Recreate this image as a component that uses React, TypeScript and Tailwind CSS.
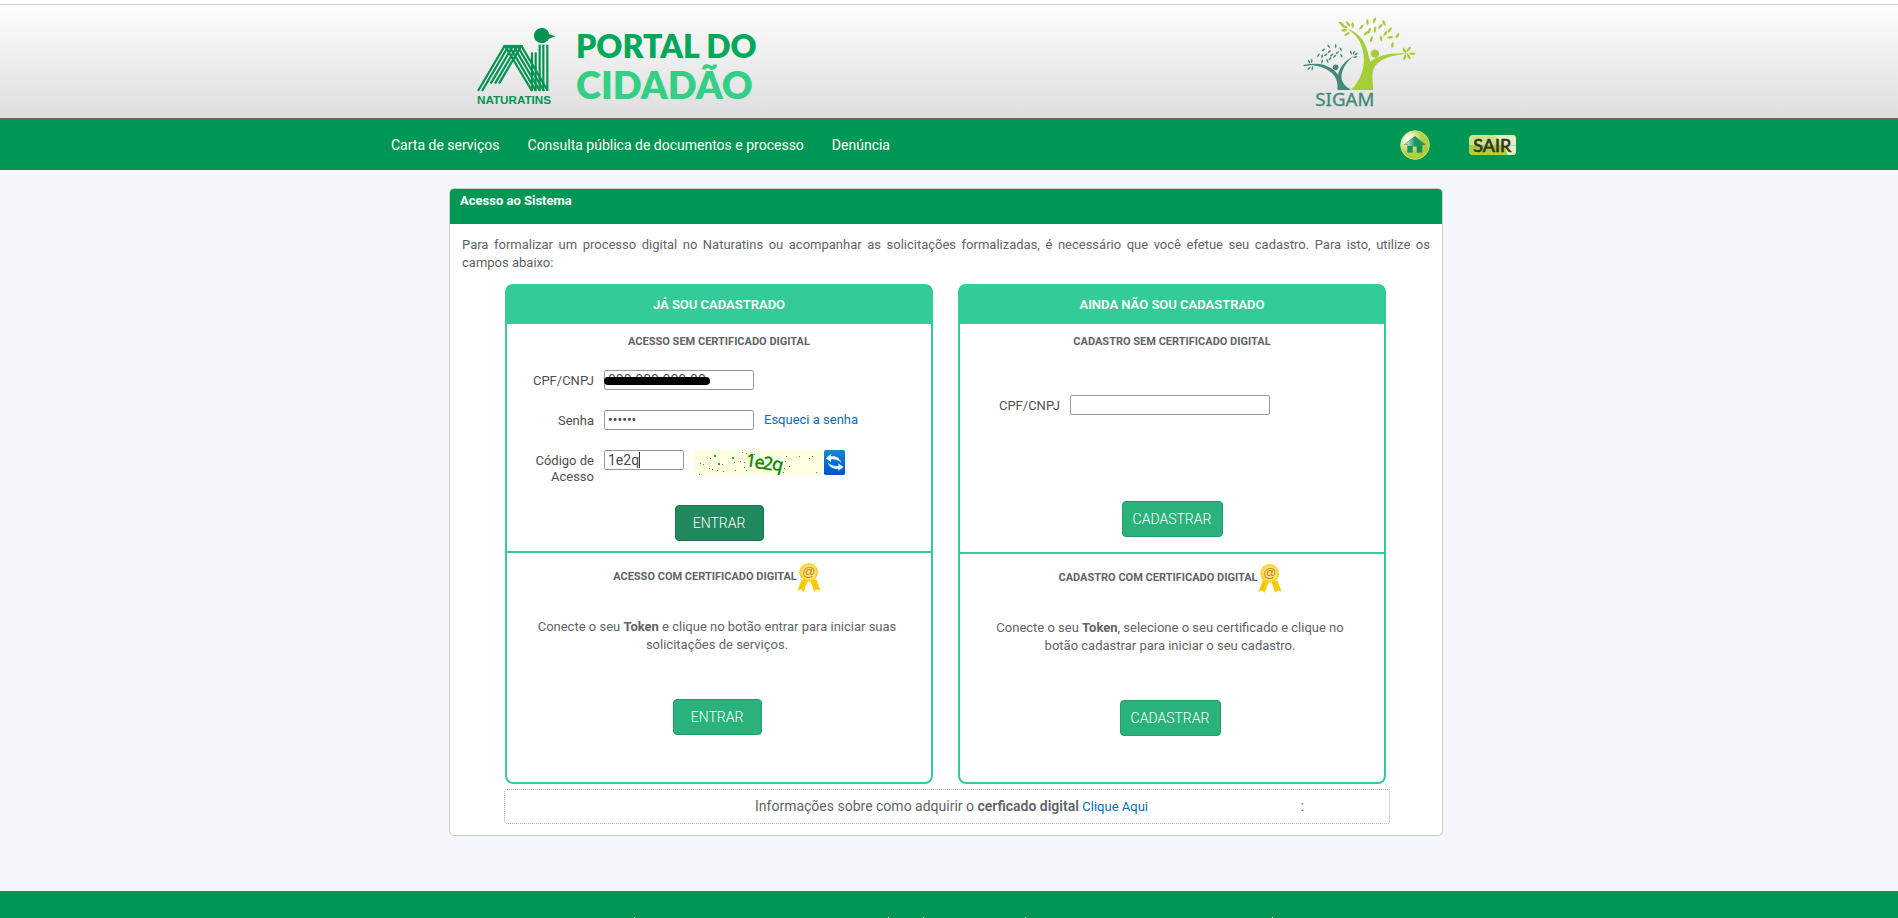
import React, { useState } from 'react';

const fieldClass =
  'h-5 rounded-[2px] border border-[#999999] bg-white px-[3px] text-[14px] leading-4 text-[#4a4a4a] outline-none';
const labelClass = 'shrink-0 pt-[3px] text-right text-[13px] leading-4 text-[#4f4f4f]';
const linkClass = 'text-[13px] text-[#0a6ebd] hover:underline';

const NaturatinsLogo: React.FC = () => (
  <svg width="90" height="90" viewBox="0 0 270 270" role="img" aria-label="Naturatins">
    <g stroke="#019350" strokeWidth="6.5" fill="none">
      <path d="M24 213 L103 79" />
      <path d="M36 213 L115 79" />
      <path d="M62 191 L128 79" />
      <path d="M75 191 L141 79" />
      <path d="M87 191 L153 79" />
      <path d="M106 79 L186 213" />
      <path d="M118 79 L198 213" />
      <path d="M131 79 L210 213" />
      <path d="M143 79 L222 213" />
      <path d="M155 79 L232 210" />
      <path d="M100 78 H158" />
      <path d="M186 97 V213" />
      <path d="M197 97 V213" />
      <path d="M209 74 V213" />
      <path d="M220 74 V213" />
      <path d="M232 74 V213" />
    </g>
    <path
      d="M216 24 C203 24 192 34 192 47 C192 60 203 69 216 69 C226 69 233 63 237 56 L256 49 L238 43 C235 31 227 24 216 24 Z"
      fill="#019350"
    />
    <text x="21" y="252" fontSize="35" fontWeight="700" fill="#019350" fontFamily="Liberation Sans, Arial, sans-serif">
      NATURATINS
    </text>
  </svg>
);

const greenLeaves: [number, number, number][] = [
  [184, 45, 40], [202, 31, -5], [223, 25, 20], [208, 56, 20], [198, 64, 45], [225, 53, 5],
  [241, 43, 40], [252, 33, -25], [269, 54, 35], [256, 64, 30], [243, 80, -5], [214, 82, 15],
  [271, 76, 80], [292, 71, 30], [277, 99, 10], [158, 39, -5], [144, 36, -35], [133, 44, -75],
  [124, 35, -60], [141, 66, 60], [132, 55, 85], [313, 115, -30], [326, 112, 35], [337, 125, 90],
  [326, 134, -30], [314, 136, 15],
];

const tealLeaves: [number, number, number][] = [
  [70, 114, 50], [86, 103, -35], [107, 102, 5], [55, 130, 30], [77, 128, 50], [66, 133, 10],
  [88, 119, 45], [95, 129, 50], [122, 112, -30], [112, 122, 45], [90, 140, 35], [66, 149, 10],
  [82, 147, -20], [104, 133, 40], [124, 131, -25], [153, 122, -20], [161, 122, 20], [168, 126, 50],
  [166, 135, 80], [27, 149, -25], [35, 147, 5], [16, 160, 90], [26, 158, 75], [27, 169, 50], [37, 169, 10],
];

const SigamLogo: React.FC = () => (
  <svg width="120" height="100" viewBox="0 0 360 300" role="img" aria-label="SIGAM">
    <g fill="#a5ce39">
      <path d="M153 234 C185 202 200 157 187 110 C180 82 164 63 140 50 C168 57 186 75 197 102 C204 119 206 135 211 149 C235 131 268 121 330 125 C285 127 246 136 227 160 C211 181 219 209 220 234 Z" />
      <circle cx="225" cy="125" r="12.5" />
      {greenLeaves.map(([x, y, angle], i) => (
        <path
          key={i}
          d="M0 -10 C6 -5 5 4 0 10 C-5 4 -5 -4 0 -10 Z"
          transform={'translate(' + x + ' ' + y + ') rotate(' + angle + ')'}
        />
      ))}
    </g>
    <g fill="#43897a">
      <path d="M112 234 C115 208 108 190 86 176 C68 164 48 159 20 158 C53 151 75 157 96 170 C105 176 111 183 114 188 C120 164 134 146 163 131 C141 147 129 166 125 187 C121 210 137 224 153 234 Z" />
      <circle cx="107" cy="166" r="8.5" />
      {tealLeaves.map(([x, y, angle], i) => (
        <path
          key={i}
          d="M0 -7 C4 -3 3 3 0 7 C-3 3 -3 -3 0 -7 Z"
          transform={'translate(' + x + ' ' + y + ') rotate(' + angle + ')'}
        />
      ))}
    </g>
    <text x="46" y="281" fontSize="56" fill="#43897a" stroke="#43897a" strokeWidth="1" fontFamily="Noto Sans, sans-serif">
      SIGAM
    </text>
  </svg>
);

const HomeIcon: React.FC = () => (
  <svg width="30" height="30" viewBox="0 0 90 90" aria-hidden="true">
    <defs>
      <radialGradient id="homeBall" cx="0.28" cy="0.3" r="0.8">
        <stop offset="0" stopColor="#ffffff" />
        <stop offset="0.3" stopColor="#e3ecb4" />
        <stop offset="0.55" stopColor="#b5d34c" />
        <stop offset="1" stopColor="#a4cb38" />
      </radialGradient>
      <linearGradient id="homeRoof" x1="0" x2="1">
        <stop offset="0.1" stopColor="#cfe8dc" />
        <stop offset="0.5" stopColor="#0d9a63" />
      </linearGradient>
    </defs>
    <circle cx="45" cy="45" r="43" fill="url(#homeBall)" stroke="#c6db7e" strokeWidth="3" />
    <path
      d="M45 19 L76 44 H66 V67 H51 V49 H37 V67 H23 V44 H13 Z"
      fill="url(#homeRoof)"
      stroke="#5f7f3d"
      strokeWidth="2"
    />
    <path d="M23 48 H37 V67 H23 Z M51 48 H66 V67 H51 Z" fill="#0b9661" />
  </svg>
);

const SairIcon: React.FC = () => (
  <svg width="47" height="20" viewBox="0 0 141 60" aria-hidden="true">
    <defs>
      <linearGradient id="sairFill" x1="0" y1="0" x2="0" y2="1">
        <stop offset="0" stopColor="#d0e08a" />
        <stop offset="0.48" stopColor="#cfdf88" />
        <stop offset="0.52" stopColor="#a3ca35" />
        <stop offset="1" stopColor="#b0d04c" />
      </linearGradient>
    </defs>
    <rect width="141" height="60" rx="11" fill="url(#sairFill)" />
    <path d="M76 0 H130 Q141 0 141 11 V49 Q141 60 130 60 H116 Q108 25 76 0 Z" fill="#e6eec3" />
    <path d="M0 31 H141" stroke="#8fc7a0" strokeWidth="2" />
    <text
      x="13"
      y="51"
      fontSize="54"
      fill="#33331f"
      stroke="#33331f"
      strokeWidth="2"
      fontFamily="Lato, sans-serif"
    >
      SAIR
    </text>
  </svg>
);

const MedalIcon: React.FC = () => (
  <svg width="24" height="29" viewBox="0 0 72 87" aria-hidden="true">
    <path d="M14 49 L1 84 L12 79 L20 86 L32 54 Z M58 49 L71 84 L60 79 L52 86 L40 54 Z" fill="#fccb05" />
    <path d="M20 56 L10 79 M50 56 L58 79" stroke="#f3b600" strokeWidth="2" />
    <circle cx="35" cy="28" r="26" fill="#fddb3d" stroke="#f7c800" strokeWidth="4" strokeDasharray="5 2" />
    <circle cx="35" cy="28" r="21" fill="#fbe07a" />
    <text
      x="35"
      y="39"
      textAnchor="middle"
      fontSize="39"
      fontStyle="italic"
      fontWeight="400"
      fill="#c98716"
      fontFamily="Liberation Sans, Arial, sans-serif"
    >
      @
    </text>
  </svg>
);

const specks: [number, number, number][] = [
  [20, 5, 2], [16, 8, 1], [38, 7, 2], [48, 2, 1], [52, 3, 1], [6, 13, 1], [5, 24, 1], [15, 18, 1],
  [18, 19, 1], [24, 13, 2], [28, 14, 1], [23, 20, 1], [29, 21, 1], [40, 12, 1], [41, 20, 1], [46, 11, 1],
  [50, 12, 1], [52, 20, 1], [50, 17, 1], [56, 5, 1], [60, 4, 1], [62, 14, 1], [92, 6, 1], [91, 11, 1],
  [90, 18, 1], [89, 22, 1], [105, 6, 1], [118, 6, 1], [115, 8, 1], [122, 22, 1], [9, 14, 1], [95, 16, 1],
];

const Captcha: React.FC = () => (
  <svg width="130" height="25" viewBox="0 0 130 25" role="img" aria-label="Código de acesso">
    <rect width="130" height="25" fill="#ffffe1" />
    <g fill="#2f9a3a">
      {specks.map(([x, y, size], i) => (
        <rect key={i} x={x} y={y} width={size} height={size} />
      ))}
    </g>
    <g fill="#0d860d" stroke="#0d860d" strokeWidth="0.4" fontFamily="Noto Sans, sans-serif" fontSize="18">
      <text transform="translate(51 16) rotate(8)">1</text>
      <text transform="translate(60 18) rotate(6)">e</text>
      <text transform="translate(68 19) rotate(8)">2</text>
      <text transform="translate(77 19) rotate(14)">q</text>
    </g>
  </svg>
);

const RefreshIcon: React.FC = () => (
  <svg width="21" height="25" viewBox="0 0 63 75" aria-hidden="true">
    <defs>
      <linearGradient id="refreshBlue" x1="0" y1="0" x2="0" y2="1">
        <stop offset="0" stopColor="#0c8ad2" />
        <stop offset="1" stopColor="#0052cc" />
      </linearGradient>
    </defs>
    <rect width="63" height="75" rx="5" fill="url(#refreshBlue)" />
    <path d="M5 25 L21 12 V19 C36 16 48 24 52 39 C44 30 34 27 21 28 V36 Z" fill="#f4faff" />
    <path d="M59 51 L43 63 V57 C28 59 15 51 11 37 C19 46 30 49 43 48 V40 Z" fill="#dcecfb" />
  </svg>
);

interface ActionButtonProps {
  label: string;
  active?: boolean;
  wide?: boolean;
}

const ActionButton: React.FC<ActionButtonProps> = ({ label, active, wide }) => (
  <button
    type="submit"
    className={
      'h-9 rounded border text-[14px] font-light text-white ' +
      (active ? 'border-[#1d7450] bg-[#21895e] ' : 'border-[#249c6a] bg-[#2ab27b] ') +
      (wide ? 'w-[101px]' : 'w-[89px]')
    }
  >
    {label}
  </button>
);

interface PanelProps {
  title: string;
  children: React.ReactNode;
}

const Panel: React.FC<PanelProps> = ({ title, children }) => (
  <section className="flex min-h-[500px] flex-1 flex-col rounded-lg border-2 border-[#33cc99] bg-white">
    <h2 className="flex h-[38px] items-center justify-center bg-[#33cc99] text-[13px] font-semibold text-white">{title}</h2>
    {children}
  </section>
);

const App: React.FC = () => {
  const [login, setLogin] = useState({ cpf: '000.000.000-00', senha: '123456', codigo: '1e2q' });
  const [cpfCadastro, setCpfCadastro] = useState('');

  const handleChange = (e: React.ChangeEvent<HTMLInputElement>) => {
    const { name, value } = e.target;
    setLogin(prev => ({ ...prev, [name]: value }));
  };

  const handleSubmit = (e: React.FormEvent<HTMLFormElement>) => {
    e.preventDefault();
  };

  return (
    <div className="flex min-h-screen flex-col overflow-hidden bg-[#f4f8fc] font-['Roboto',sans-serif] text-[#5f6468]">
      <header>
        <div className="border-t-4 border-white">
          <div className="border-t border-[#cccccc] border-b-2 border-b-[#666666] bg-linear-to-b from-[#fdfdfd] to-[#dedede]">
            <div className="mx-auto flex h-[113px] max-w-[1140px] items-start justify-between pr-[99px] pl-[91px]">
              <div className="flex pt-[15px]">
                <NaturatinsLogo />
                <h1 className="ml-4 pt-2 font-['Lato',sans-serif] font-extrabold">
                  <span className="block text-[32px] leading-9 text-[#00a859]">PORTAL DO</span>
                  <span className="block text-[38px] leading-10 text-[#33cf85]">CIDADÃO</span>
                </h1>
              </div>
              <div className="pt-[7px]">
                <SigamLogo />
              </div>
            </div>
          </div>
        </div>
        <nav className="bg-[#009754] text-[14px] text-white">
          <div className="mx-auto flex h-[50px] max-w-[1140px] items-center pr-[3px] pl-3">
            <div className="flex gap-7">
              <a href="#carta">Carta de serviços</a>
              <a href="#consulta">Consulta pública de documentos e processo</a>
              <a href="#denuncia">Denúncia</a>
            </div>
            <div className="ml-auto flex items-center gap-[39px]">
              <a href="#inicio" aria-label="Início">
                <HomeIcon />
              </a>
              <a href="#sair" aria-label="Sair">
                <SairIcon />
              </a>
            </div>
          </div>
        </nav>
      </header>

      <main className="mx-auto w-full max-w-[1000px] grow pt-[18px] pr-[6px]">
        <div className="overflow-hidden rounded-[5px] border border-[#cccccc] bg-white pb-[11px]">
          <div className="h-[35px] bg-[#009754] px-[10px] pt-1 text-[13px] leading-4 font-bold text-white">
            Acesso ao Sistema
          </div>
          <p className="px-3 pt-3 text-justify text-[13px] leading-[18px]">
            Para formalizar um processo digital no Naturatins ou acompanhar as solicitações formalizadas, é necessário
            que você efetue seu cadastro. Para isto, utilize os campos{'\u00a0'}abaixo:
          </p>

          <div className="mt-3 mr-[56px] ml-[55px] flex gap-[25px]">
            <Panel title="JÁ SOU CADASTRADO">
              <form onSubmit={handleSubmit} className="h-[229px] border-b-2 border-[#33cc99] pt-[10px]">
                <h3 className="text-center text-[11px] leading-4 font-bold">ACESSO SEM CERTIFICADO DIGITAL</h3>
                <div className="mt-5 flex h-5 gap-[10px]">
                  <label htmlFor="cpf" className={labelClass + ' w-[87px]'}>CPF/CNPJ</label>
                  <div className="relative flex">
                    <input id="cpf" name="cpf" type="text" value={login.cpf} onChange={handleChange} className={fieldClass + ' w-[150px]'} />
                    <span className="absolute top-[7px] left-0 h-2 w-[106px] rounded-full bg-black" />
                  </div>
                </div>
                <div className="mt-5 flex h-5 gap-[10px]">
                  <label htmlFor="senha" className={labelClass + ' w-[87px]'}>Senha</label>
                  <input id="senha" name="senha" type="password" value={login.senha} onChange={handleChange} className={fieldClass + ' w-[150px]'} />
                  <a href="#senha" className={linkClass + ' leading-5'}>Esqueci a senha</a>
                </div>
                <div className="mt-5 flex h-[35px] gap-[10px]">
                  <label htmlFor="codigo" className={labelClass + ' w-[87px]'}>Código de Acesso</label>
                  <div className="relative flex h-5">
                    <input id="codigo" name="codigo" type="text" value={login.codigo} onChange={handleChange} className={fieldClass + ' w-20'} />
                    <span className="absolute top-[2px] left-[35px] h-4 w-px bg-[#333333]" />
                  </div>
                  <div className="flex h-[25px]">
                    <Captcha />
                    <button type="button" aria-label="Atualizar código">
                      <RefreshIcon />
                    </button>
                  </div>
                </div>
                <div className="mt-5 flex justify-center">
                  <ActionButton label="ENTRAR" active />
                </div>
              </form>
              <form onSubmit={handleSubmit} className="pt-[10px] pr-1 text-center">
                <h3 className="flex items-center justify-center text-[11px] font-bold">
                  ACESSO COM CERTIFICADO DIGITAL
                  <MedalIcon />
                </h3>
                <p className="mt-[26px] text-[13px] leading-[18px]">
                  Conecte o seu <b>Token</b> e clique no botão entrar para iniciar suas
                  <br />
                  solicitações de serviços.
                </p>
                <div className="mt-[45px] flex justify-center">
                  <ActionButton label="ENTRAR" />
                </div>
              </form>
            </Panel>

            <Panel title="AINDA NÃO SOU CADASTRADO">
              <form onSubmit={handleSubmit} className="h-[230px] border-b-2 border-[#33cc99] pt-[10px]">
                <h3 className="text-center text-[11px] leading-4 font-bold">CADASTRO SEM CERTIFICADO DIGITAL</h3>
                <div className="mt-[45px] flex h-5 gap-[10px]">
                  <label htmlFor="cpfCadastro" className={labelClass + ' w-[100px]'}>CPF/CNPJ</label>
                  <input id="cpfCadastro" type="text" value={cpfCadastro} onChange={e => setCpfCadastro(e.target.value)} className={fieldClass + ' w-[200px]'} />
                </div>
                <div className="mt-[86px] flex justify-center">
                  <ActionButton label="CADASTRAR" wide />
                </div>
              </form>
              <form onSubmit={handleSubmit} className="pt-[10px] pr-1 text-center">
                <h3 className="flex items-center justify-center text-[11px] font-bold">
                  CADASTRO COM CERTIFICADO DIGITAL
                  <MedalIcon />
                </h3>
                <p className="mt-[26px] text-[13px] leading-[18px]">
                  Conecte o seu <b>Token</b>, selecione o seu certificado e clique no
                  <br />
                  botão cadastrar para iniciar o seu cadastro.
                </p>
                <div className="mt-[45px] flex justify-center">
                  <ActionButton label="CADASTRAR" wide />
                </div>
              </form>
            </Panel>
          </div>

          <div className="mt-[5px] mr-[52px] ml-[54px] flex h-[35px] items-center rounded-[3px] border border-dotted border-[#aaaaaa] pr-[85px] pl-[250px] text-[14px]">
            <p>
              Informações sobre como adquirir o <b className="font-semibold">cerficado digital</b>{' '}
              <a href="#certificado" className={linkClass}>Clique Aqui</a>
            </p>
            <span className="ml-auto">:</span>
          </div>
        </div>
      </main>

      <footer className="flex h-[27px] items-end justify-center bg-[#009754]">
        <svg width="650" height="1" viewBox="0 0 650 1" aria-hidden="true" fill="#d5eee2">
          <path d="M10 0h1v1h-1z M264 0h1v1h-1z M299 0h1v1h-1z M401 0h1v1h-1z M648 0h1v1h-1z" />
        </svg>
      </footer>
    </div>
  );
};

export default App;
